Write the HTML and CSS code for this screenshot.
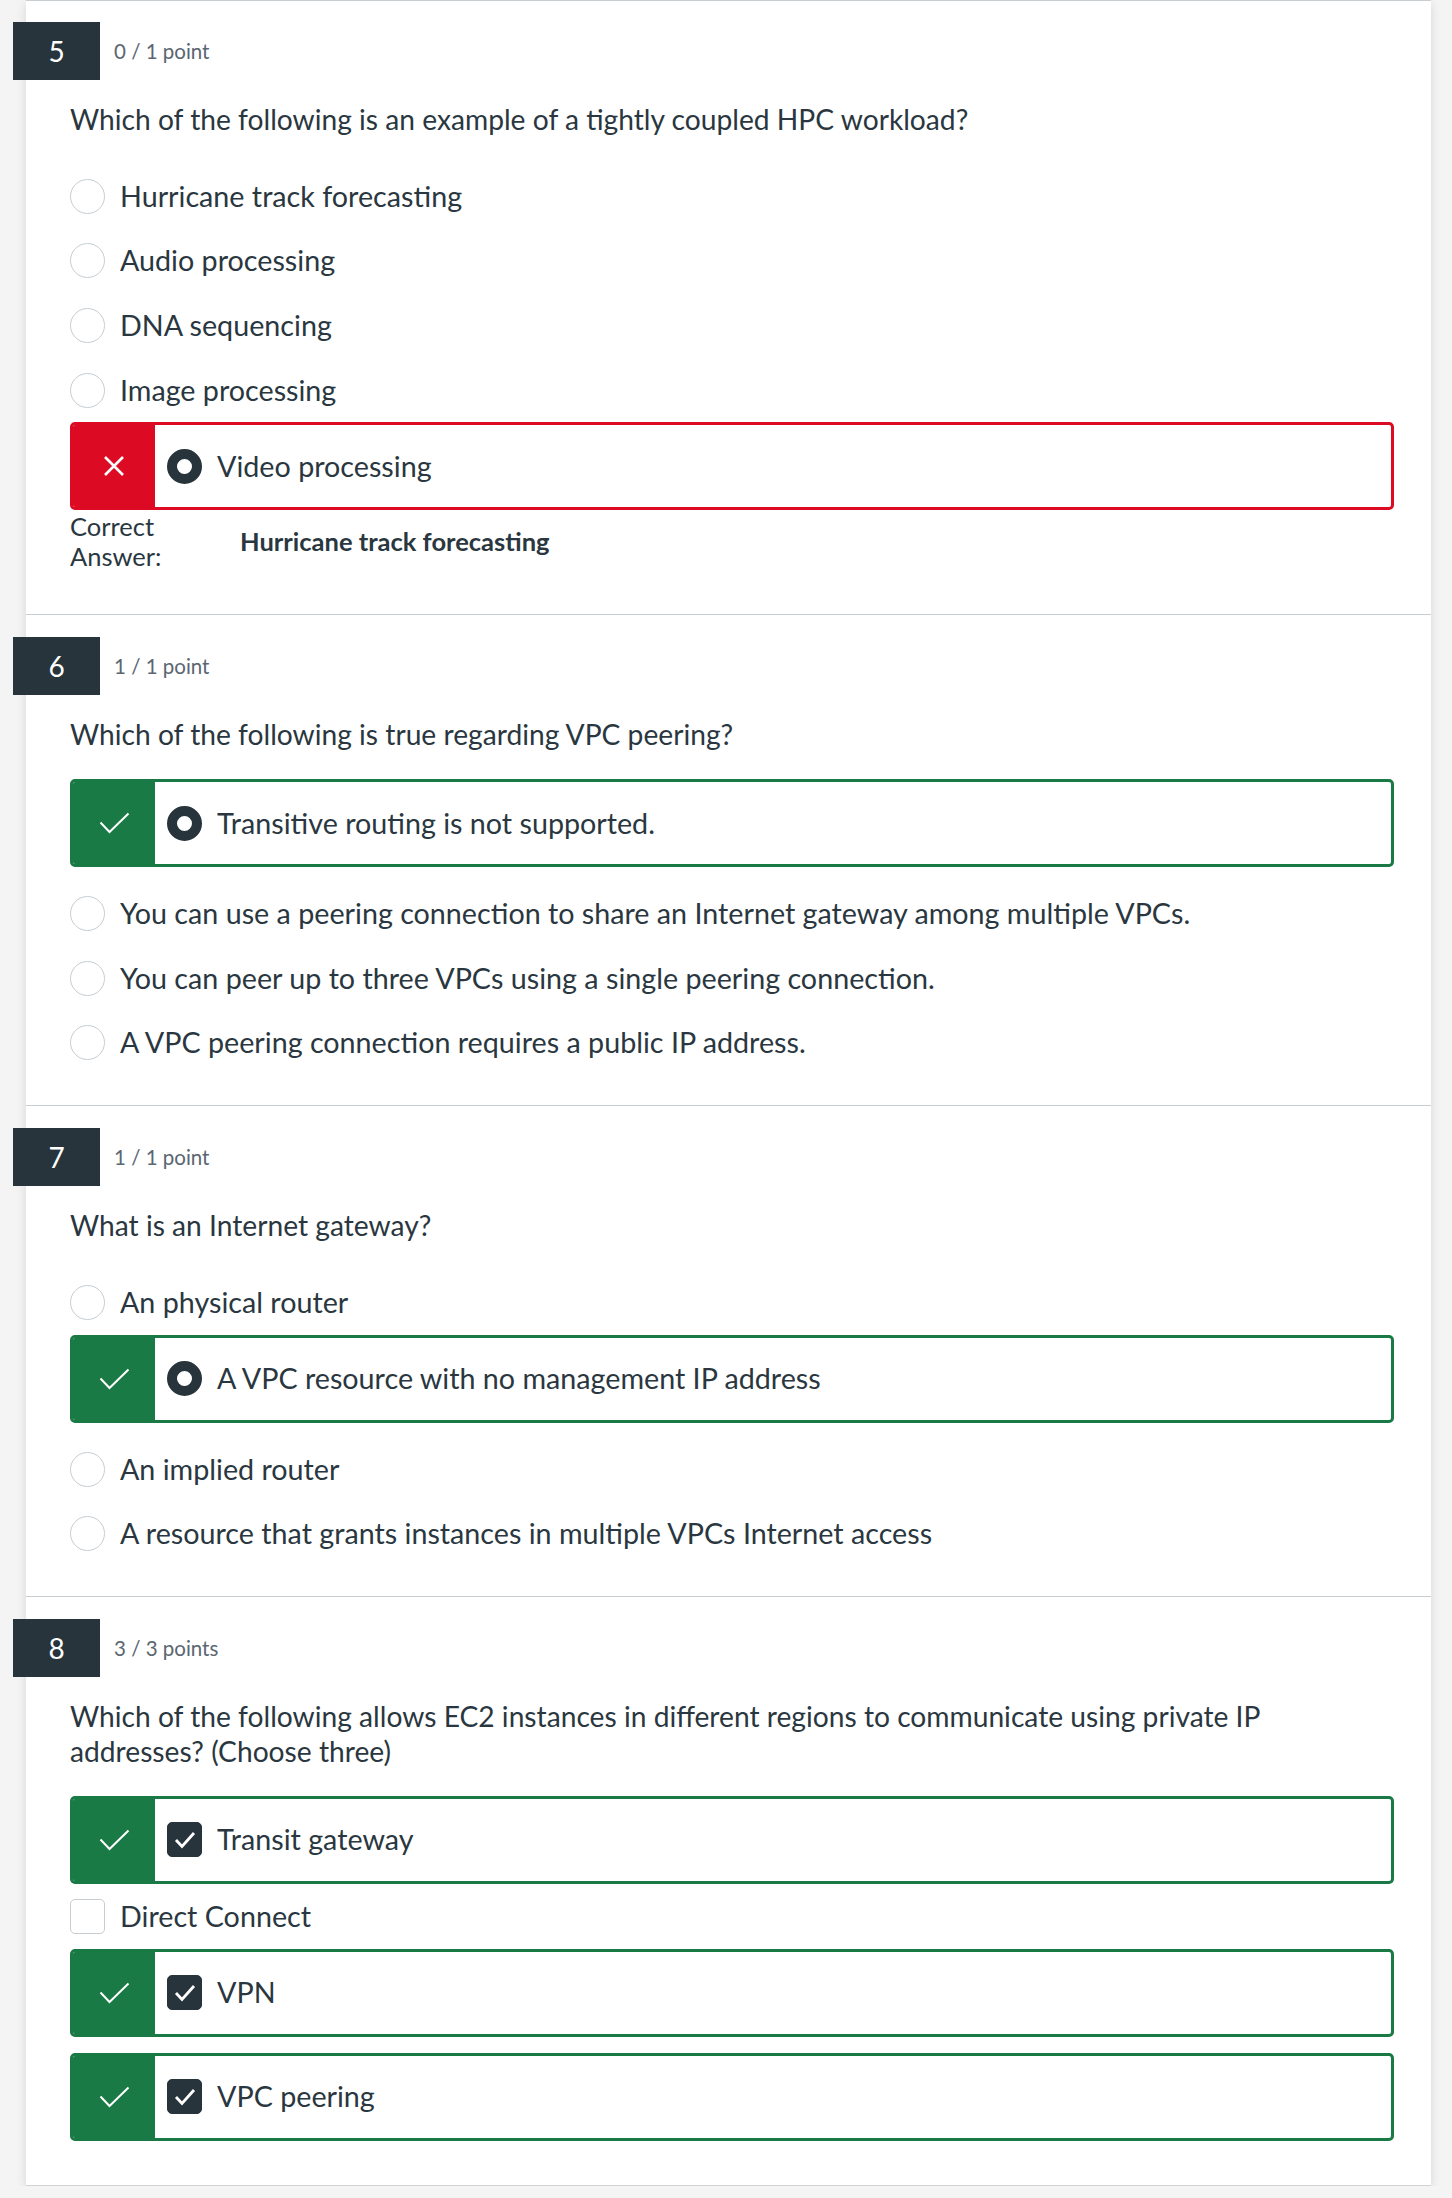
FILE: index.html
```html
<!DOCTYPE html>
<html lang="en">
<head>
<meta charset="utf-8">
<title>Quiz results</title>
<link rel="stylesheet" href="styles.css">
</head>
<body>
<div class="page">
  <div class="card">

    <section class="question first">
      <div class="q-header">
        <div class="q-num">5</div>
        <div class="q-points">0 / 1 point</div>
      </div>
      <div class="q-text">Which of the following is an example of a tightly coupled HPC workload?</div>
      <div class="answers">
        <div class="answer"><span class="radio"></span><span class="a-text">Hurricane track forecasting</span></div>
        <div class="answer"><span class="radio"></span><span class="a-text">Audio processing</span></div>
        <div class="answer"><span class="radio"></span><span class="a-text">DNA sequencing</span></div>
        <div class="answer"><span class="radio"></span><span class="a-text">Image processing</span></div>
        <div class="answer boxed wrong">
          <span class="indicator">
            <svg width="22" height="22" viewBox="0 0 22 22"><path d="M2 2 L20 20 M20 2 L2 20" stroke="#fff" stroke-width="2.6" fill="none"/></svg>
          </span>
          <span class="radio selected"></span><span class="a-text">Video processing</span>
        </div>
      </div>
      <div class="correct-answer">
        <div class="ca-label">Correct<br>Answer:</div>
        <div class="ca-value">Hurricane track forecasting</div>
      </div>
    </section>

    <section class="question">
      <div class="q-header">
        <div class="q-num">6</div>
        <div class="q-points">1 / 1 point</div>
      </div>
      <div class="q-text">Which of the following is true regarding VPC peering?</div>
      <div class="answers">
        <div class="answer boxed right">
          <span class="indicator">
            <svg width="31" height="22" viewBox="0 0 31 22"><path d="M1.5 10.5 L10.5 20 L29.5 1.5" stroke="#fff" stroke-width="2" fill="none"/></svg>
          </span>
          <span class="radio selected"></span><span class="a-text">Transitive routing is not supported.</span>
        </div>
        <div class="answer after-box"><span class="radio"></span><span class="a-text">You can use a peering connection to share an Internet gateway among multiple VPCs.</span></div>
        <div class="answer"><span class="radio"></span><span class="a-text">You can peer up to three VPCs using a single peering connection.</span></div>
        <div class="answer"><span class="radio"></span><span class="a-text">A VPC peering connection requires a public IP address.</span></div>
      </div>
    </section>

    <section class="question">
      <div class="q-header">
        <div class="q-num">7</div>
        <div class="q-points">1 / 1 point</div>
      </div>
      <div class="q-text">What is an Internet gateway?</div>
      <div class="answers">
        <div class="answer"><span class="radio"></span><span class="a-text">An physical router</span></div>
        <div class="answer boxed right">
          <span class="indicator">
            <svg width="31" height="22" viewBox="0 0 31 22"><path d="M1.5 10.5 L10.5 20 L29.5 1.5" stroke="#fff" stroke-width="2" fill="none"/></svg>
          </span>
          <span class="radio selected"></span><span class="a-text">A VPC resource with no management IP address</span>
        </div>
        <div class="answer after-box"><span class="radio"></span><span class="a-text">An implied router</span></div>
        <div class="answer"><span class="radio"></span><span class="a-text">A resource that grants instances in multiple VPCs Internet access</span></div>
      </div>
    </section>

    <section class="question last">
      <div class="q-header">
        <div class="q-num">8</div>
        <div class="q-points">3 / 3 points</div>
      </div>
      <div class="q-text">Which of the following allows EC2 instances in different regions to communicate using private IP addresses? (Choose three)</div>
      <div class="answers">
        <div class="answer boxed right">
          <span class="indicator">
            <svg width="31" height="22" viewBox="0 0 31 22"><path d="M1.5 10.5 L10.5 20 L29.5 1.5" stroke="#fff" stroke-width="2" fill="none"/></svg>
          </span>
          <span class="checkbox checked">
            <svg width="22" height="18" viewBox="0 0 22 18"><path d="M2 9 L8 15.5 L20 2" stroke="#fff" stroke-width="2.8" fill="none"/></svg>
          </span><span class="a-text">Transit gateway</span>
        </div>
        <div class="answer"><span class="checkbox"></span><span class="a-text">Direct Connect</span></div>
        <div class="answer boxed right">
          <span class="indicator">
            <svg width="31" height="22" viewBox="0 0 31 22"><path d="M1.5 10.5 L10.5 20 L29.5 1.5" stroke="#fff" stroke-width="2" fill="none"/></svg>
          </span>
          <span class="checkbox checked">
            <svg width="22" height="18" viewBox="0 0 22 18"><path d="M2 9 L8 15.5 L20 2" stroke="#fff" stroke-width="2.8" fill="none"/></svg>
          </span><span class="a-text">VPN</span>
        </div>
        <div class="answer boxed right box-gap">
          <span class="indicator">
            <svg width="31" height="22" viewBox="0 0 31 22"><path d="M1.5 10.5 L10.5 20 L29.5 1.5" stroke="#fff" stroke-width="2" fill="none"/></svg>
          </span>
          <span class="checkbox checked">
            <svg width="22" height="18" viewBox="0 0 22 18"><path d="M2 9 L8 15.5 L20 2" stroke="#fff" stroke-width="2.8" fill="none"/></svg>
          </span><span class="a-text">VPC peering</span>
        </div>
      </div>
    </section>

  </div>
</div>
</body>
</html>
```

FILE: styles.css
```css
html, body {
  margin: 0;
  padding: 0;
}

body {
  background: #f4f4f4;
  font-family: Lato, "Liberation Sans", sans-serif;
  color: #2a3740;
  overflow: hidden;
}

.page {
  padding: 0 21px 0 26px;
}

.card {
  background: #ffffff;
  border-top: 1px solid #c7cdd1;
  border-bottom: 1px solid #cfd3d6;
  box-shadow: 0 3px 10px rgba(0, 0, 0, 0.12);
}

.question {
  padding: 22px 37px 30px 44px;
  border-bottom: 1px solid #c7cdd1;
}

.question.first {
  padding-top: 21px;
  padding-bottom: 43px;
}

.question.last {
  border-bottom: none;
  padding-bottom: 44px;
}

.q-header {
  display: flex;
  align-items: center;
  margin-left: -57px;
}

.q-num {
  width: 87px;
  height: 58px;
  background: #27343b;
  color: #ffffff;
  font-size: 28px;
  display: flex;
  align-items: center;
  justify-content: center;
}

.q-points {
  margin-left: 14px;
  font-size: 20.5px;
  color: #5a6671;
}

.q-text {
  margin-top: 22px;
  font-size: 28.2px;
  line-height: 35px;
  max-width: 1290px;
}

.answers {
  margin-top: 27px;
}

.answer {
  display: flex;
  align-items: center;
  height: 64.6px;
  font-size: 28.7px;
  line-height: 35px;
}

.answer.boxed {
  height: 88px;
  box-sizing: border-box;
  border: 3px solid;
  border-radius: 5px;
  overflow: hidden;
}

.answer.wrong {
  border-color: #dc0a23;
}

.answer.right {
  border-color: #1a7a45;
}

.answer.after-box {
  margin-top: 14px;
}

.answer.box-gap {
  margin-top: 16px;
}

.indicator {
  align-self: stretch;
  width: 82px;
  flex: none;
  display: flex;
  align-items: center;
  justify-content: center;
  margin-right: 12px;
}

.wrong .indicator {
  background: #dc0a23;
}

.right .indicator {
  background: #1a7a45;
}

.indicator svg {
  display: block;
}

.radio {
  width: 35px;
  height: 35px;
  flex: none;
  box-sizing: border-box;
  border: 1px solid #c7cdd1;
  border-radius: 50%;
  margin-right: 15px;
}

.radio.selected {
  border: 10px solid #27343b;
}

.checkbox {
  width: 35px;
  height: 35px;
  flex: none;
  box-sizing: border-box;
  border: 1px solid #c7cdd1;
  border-radius: 5px;
  margin-right: 15px;
  display: flex;
  align-items: center;
  justify-content: center;
}

.checkbox.checked {
  background: #27343b;
  border-color: #27343b;
}

.checkbox svg {
  display: block;
}

.a-text {
  white-space: nowrap;
}

.correct-answer {
  display: flex;
  align-items: center;
  margin-top: 2px;
  font-size: 25.5px;
  line-height: 29.5px;
}

.ca-label {
  width: 170px;
  flex: none;
}

.ca-value {
  font-weight: bold;
}
```
